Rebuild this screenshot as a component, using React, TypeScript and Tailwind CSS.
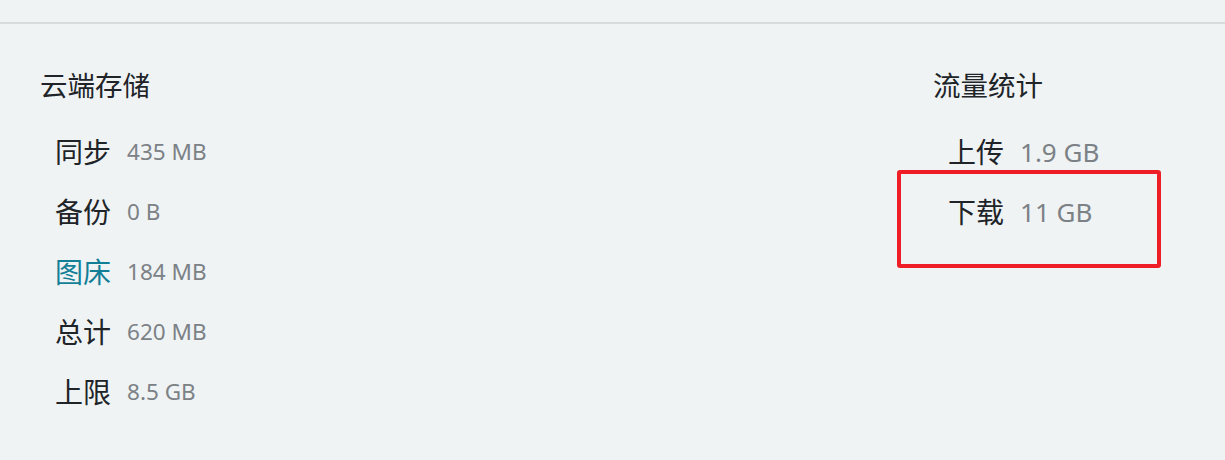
const storage = [
  { label: "同步", value: "435 MB" },
  { label: "备份", value: "0 B" },
  { label: "图床", value: "184 MB", link: true },
  { label: "总计", value: "620 MB" },
  { label: "上限", value: "8.5 GB" },
];

const traffic = [
  { label: "上传", value: "1.9 GB" },
  { label: "下载", value: "11 GB", marked: true },
];

type Item = { label: string; value: string; link?: boolean; marked?: boolean };

function Row({ item, big }: { item: Item; big?: boolean }) {
  return (
    <div className="relative flex h-[60px] items-center pl-[15px]">
      <span
        className={
          item.link
            ? "text-[28px] leading-none text-[#137f97]"
            : "text-[28px] leading-none text-[#202327]"
        }
      >
        {item.label}
      </span>
      <span
        className={
          big
            ? "ml-[16px] text-[26px] leading-none text-[#7c8186]"
            : "ml-[16px] text-[22.5px] leading-none text-[#7c8186]"
        }
      >
        {item.value}
      </span>
      {/* red annotation box */}
      {item.marked && (
        <div className="absolute left-[-36px] top-[-12px] h-[98px] w-[264px] rounded-[3px] border-[4px] border-[#ee1d26]" />
      )}
    </div>
  );
}

export default function App() {
  return (
    <div
      className="h-[460px] w-[1225px] overflow-hidden bg-[#eff3f4]"
      style={{ fontFamily: '"Noto Sans", "Noto Sans CJK SC", sans-serif' }}
    >
      <div className="h-[24px] border-b-2 border-[#d8dcdd]" />

      <div className="flex pl-[40px] pt-[44px]">
        {/* Cloud storage */}
        <div className="flex-1">
          <h2 className="h-[36px] text-[27.5px] leading-[36px] text-[#202327]">云端存储</h2>
          <div className="mt-[18px]">
            {storage.map((item) => (
              <Row key={item.label} item={item} />
            ))}
          </div>
        </div>

        {/* Traffic */}
        <div className="w-[292px]">
          <h2 className="h-[36px] text-[27.5px] leading-[36px] text-[#202327]">流量统计</h2>
          <div className="mt-[18px]">
            {traffic.map((item) => (
              <Row key={item.label} item={item} big />
            ))}
          </div>
        </div>
      </div>
    </div>
  );
}
